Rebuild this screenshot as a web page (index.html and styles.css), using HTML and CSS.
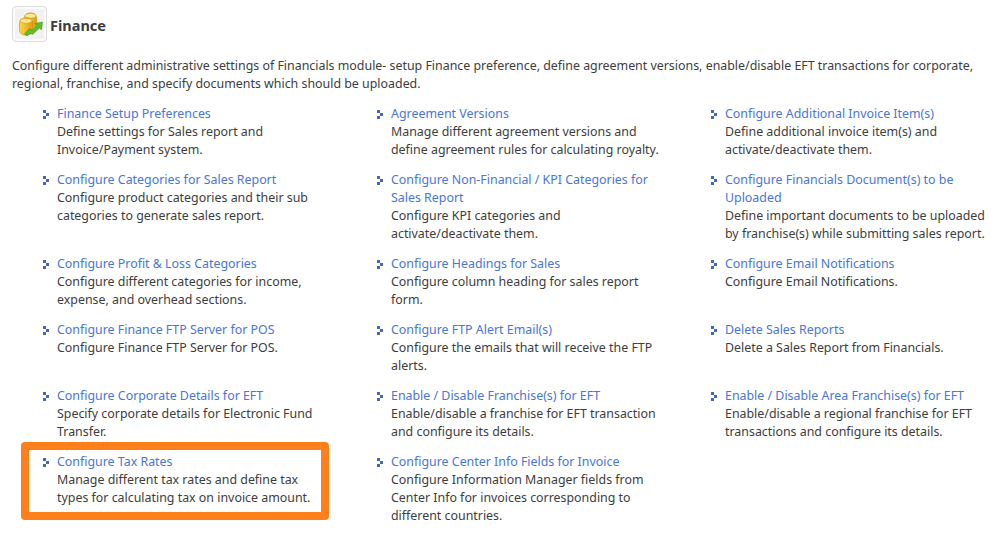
FILE: index.html
```html
<!DOCTYPE html>
<html lang="en">
  <head>
    <meta charset="UTF-8" />
    <title>Finance</title>
    <link rel="stylesheet" href="styles.css">
  </head>
  <body>
    <div class="header">
      <div class="header-icon">
        <svg width="28" height="28" viewBox="0 0 28 28">
          <defs>
            <linearGradient id="coin" x1="0" x2="1" y1="0" y2="0">
              <stop offset="0" stop-color="#fbd84a" />
              <stop offset="1" stop-color="#e09c10" />
            </linearGradient>
          </defs>
          <rect x="8.5" y="3" width="12" height="15" rx="5" fill="url(#coin)" stroke="#c98a0e" stroke-width="0.6" />
          <ellipse cx="14.5" cy="5.8" rx="5.6" ry="2.4" fill="#fde98f" stroke="#d99a14" stroke-width="0.6" />
          <rect x="3.5" y="8" width="13" height="17" rx="5" fill="url(#coin)" stroke="#c98a0e" stroke-width="0.6" />
          <ellipse cx="10" cy="10.8" rx="6" ry="2.4" fill="#fde98f" stroke="#d99a14" stroke-width="0.6" />
          <path d="M8.5 24 L13.5 18.5 L16 20 L20.5 15.5 L18.5 13.5 L26.5 12 L25.5 20 L23.5 18 L16.5 24.5 L14 23 L11 26 Z" fill="#62bb2c" stroke="#3f8f1a" stroke-width="0.5" />
        </svg>
      </div>
      <h1>Finance</h1>
    </div>
    <p class="intro">Configure different administrative settings of Financials module- setup Finance preference, define agreement versions, enable/disable EFT transactions for corporate, regional, franchise, and specify documents which should be uploaded.</p>

    <div class="links">
      <div class="item"><a href="#">Finance Setup Preferences</a><p>Define settings for Sales report and Invoice/Payment system.</p></div>
      <div class="item"><a href="#">Agreement Versions</a><p>Manage different agreement versions and define agreement rules for calculating royalty.</p></div>
      <div class="item"><a href="#">Configure Additional Invoice Item(s)</a><p>Define additional invoice item(s) and activate/deactivate them.</p></div>

      <div class="item"><a href="#">Configure Categories for Sales Report</a><p>Configure product categories and their sub categories to generate sales report.</p></div>
      <div class="item"><a href="#">Configure Non-Financial / KPI Categories for Sales Report</a><p>Configure KPI categories and activate/deactivate them.</p></div>
      <div class="item"><a href="#">Configure Financials Document(s) to be Uploaded</a><p>Define important documents to be uploaded by franchise(s) while submitting sales report.</p></div>

      <div class="item"><a href="#">Configure Profit &amp; Loss Categories</a><p>Configure different categories for income, expense, and overhead sections.</p></div>
      <div class="item"><a href="#">Configure Headings for Sales</a><p>Configure column heading for sales report form.</p></div>
      <div class="item"><a href="#">Configure Email Notifications</a><p>Configure Email Notifications.</p></div>

      <div class="item"><a href="#">Configure Finance FTP Server for POS</a><p>Configure Finance FTP Server for POS.</p></div>
      <div class="item"><a href="#">Configure FTP Alert Email(s)</a><p>Configure the emails that will receive the FTP alerts.</p></div>
      <div class="item"><a href="#">Delete Sales Reports</a><p>Delete a Sales Report from Financials.</p></div>

      <div class="item"><a href="#">Configure Corporate Details for EFT</a><p>Specify corporate details for Electronic Fund Transfer.</p></div>
      <div class="item"><a href="#">Enable / Disable Franchise(s) for EFT</a><p>Enable/disable a franchise for EFT transaction and configure its details.</p></div>
      <div class="item"><a href="#">Enable / Disable Area Franchise(s) for EFT</a><p>Enable/disable a regional franchise for EFT transactions and configure its details.</p></div>

      <div class="item"><div class="highlight"></div><a href="#">Configure Tax Rates</a><p>Manage different tax rates and define tax types for calculating tax on invoice amount.</p></div>
      <div class="item"><a href="#">Configure Center Info Fields for Invoice</a><p>Configure Information Manager fields from Center Info for invoices corresponding to different countries.</p></div>
    </div>
  </body>
</html>
```

FILE: styles.css
```css
body {
  margin: 0;
  padding: 6px 12px 0;
  background: #fff;
  color: #3d3d3d;
  font-family: "Noto Sans", Arial, sans-serif;
  font-size: 12.4px;
  line-height: 18px;
}
.header {
  display: flex;
  align-items: center;
  gap: 3px;
}
.header-icon {
  width: 33px;
  height: 34px;
  display: flex;
  align-items: center;
  justify-content: center;
  border: 1px solid #ddd;
  border-radius: 4px;
  background: #f2f2f2;
  box-shadow: inset 0 0 0 2px #fafafa;
}
h1 {
  margin: 0;
  padding-top: 2px;
  font-size: 14.5px;
  font-weight: 700;
}
.intro {
  margin: 15px 0 12px;
}
.links {
  display: grid;
  grid-template-columns: repeat(3, 334px);
  padding-left: 31px;
}
.item {
  position: relative;
  padding: 0 50px 12px 14px;
}
.item::before {
  content: "";
  position: absolute;
  left: 0;
  top: 5px;
  width: 6px;
  height: 9px;
  background:
    linear-gradient(#4466bb, #4466bb) 0 0 / 3px 3px no-repeat,
    linear-gradient(#4466bb, #4466bb) 3px 3px / 3px 3px no-repeat,
    linear-gradient(#4466bb, #4466bb) 0 6px / 3px 3px no-repeat;
}
.item a {
  color: #4a76d4;
  text-decoration: none;
}
.item p {
  margin: 0;
}
.highlight {
  position: absolute;
  left: -22px;
  top: -11px;
  width: 292px;
  height: 62px;
  border: 8px solid #ff7f1a;
  border-radius: 4px;
}
```
